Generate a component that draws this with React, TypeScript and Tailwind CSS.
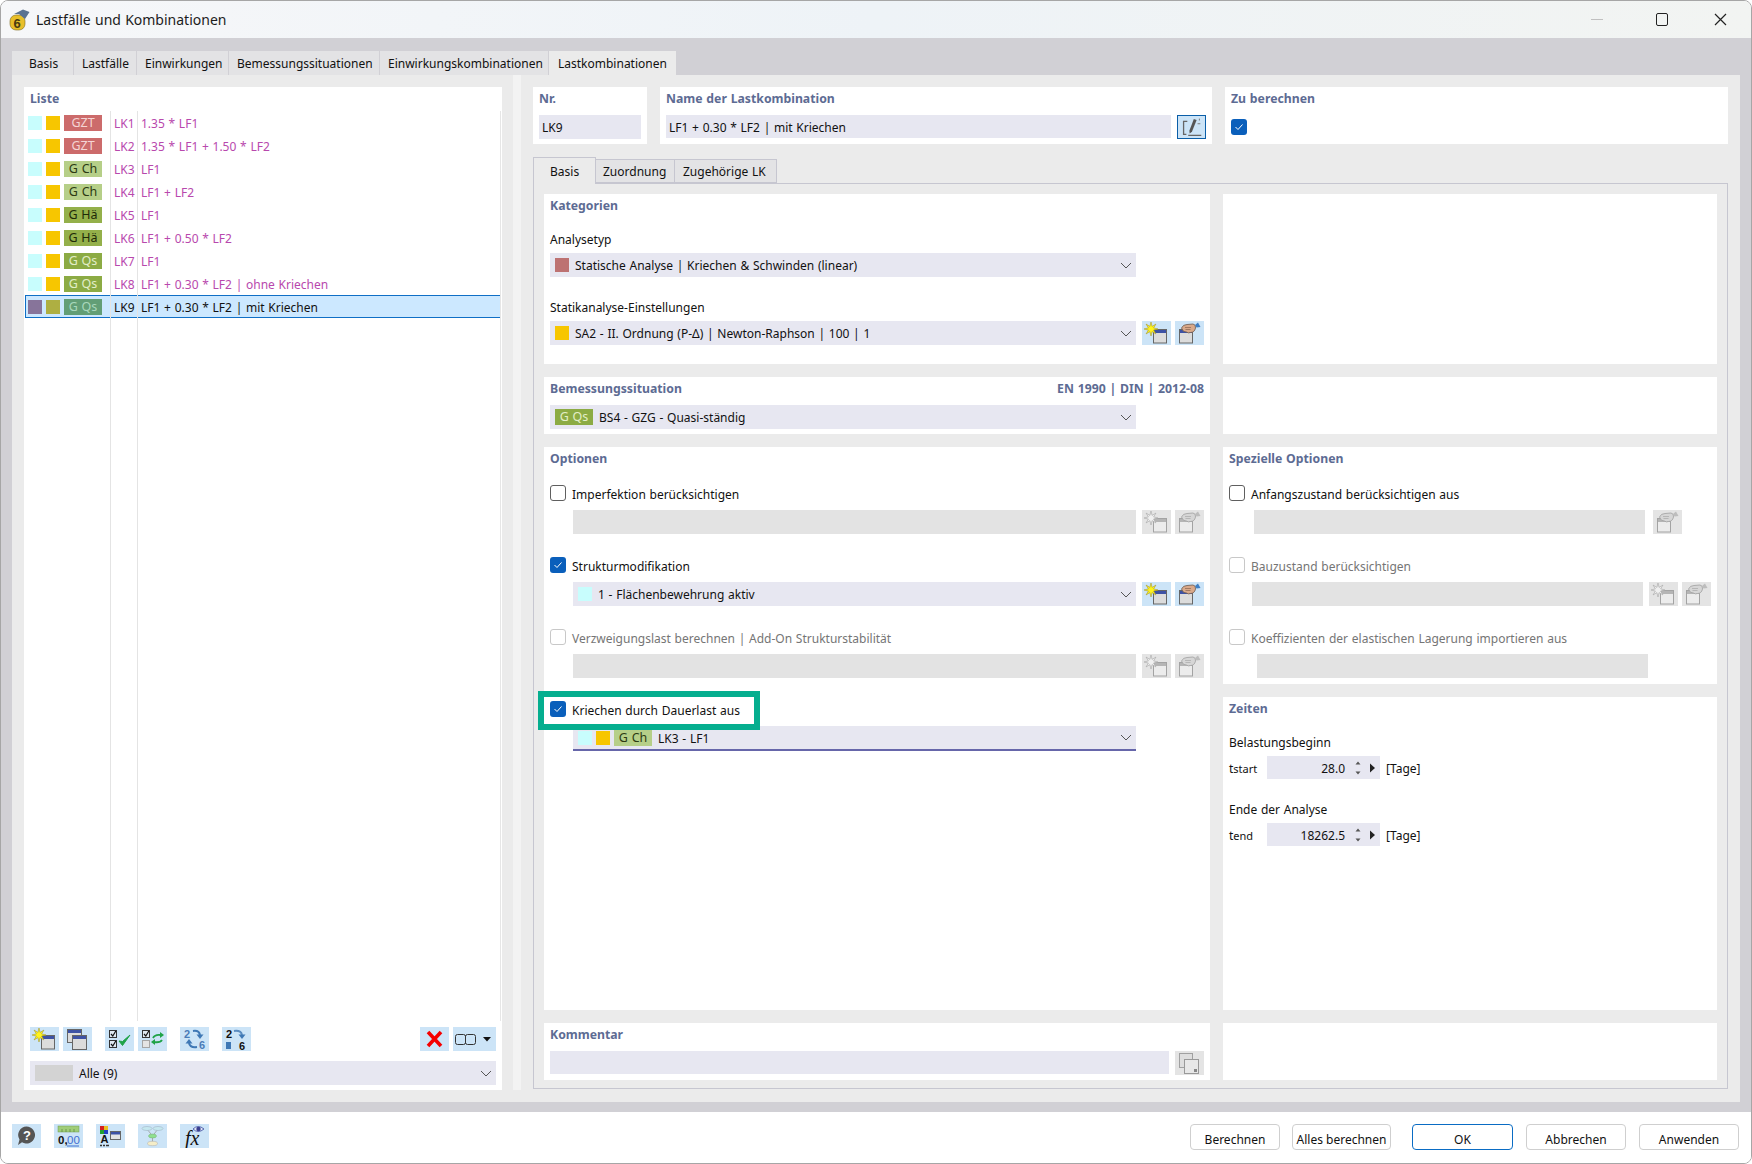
import React from 'react';

const CYAN = 'bg-[#c8fdfd]';
const YELLOW = 'bg-[#f7c600]';

const TAG_STYLES: Record<string, string> = {
  GZT: 'bg-[#cc6b6b] text-[#f5d5d5]',
  'G Ch': 'bg-[#b6cf88] text-[#2c3a12]',
  'G Hä': 'bg-[#94b04a] text-[#1e2a08]',
  'G Qs': 'bg-[#8cab44] text-[#e3eec8]',
};

const ROWS = [
  { id: 'LK1', tag: 'GZT', text: '1.35 * LF1' },
  { id: 'LK2', tag: 'GZT', text: '1.35 * LF1 + 1.50 * LF2' },
  { id: 'LK3', tag: 'G Ch', text: 'LF1' },
  { id: 'LK4', tag: 'G Ch', text: 'LF1 + LF2' },
  { id: 'LK5', tag: 'G Hä', text: 'LF1' },
  { id: 'LK6', tag: 'G Hä', text: 'LF1 + 0.50 * LF2' },
  { id: 'LK7', tag: 'G Qs', text: 'LF1' },
  { id: 'LK8', tag: 'G Qs', text: 'LF1 + 0.30 * LF2 | ohne Kriechen' },
];

// label text sits a bit lower than the centre of its row
function Txt({ children, className = '' }: { children: React.ReactNode; className?: string }) {
  return <span className={`pt-[2px] whitespace-nowrap ${className}`}>{children}</span>;
}

function Tag({ name, className = '' }: { name: string; className?: string }) {
  return (
    <span className={`w-[38px] h-4 pt-px text-[12.5px] flex items-center justify-center shrink-0 ${TAG_STYLES[name]} ${className}`}>
      {name}
    </span>
  );
}

function Star({ dis }: { dis?: boolean }) {
  return (
    <polygon
      points="9,1 10.07,5.41 13.95,3.05 11.59,6.93 16,8 11.59,9.07 13.95,12.95 10.07,10.59 9,15 7.93,10.59 4.05,12.95 6.41,9.07 2,8 6.41,6.93 4.05,3.05 7.93,5.41"
      fill={dis ? '#f0f0f0' : '#fff31a'}
      stroke={dis ? '#a5a5a5' : '#a89a2a'}
      strokeWidth="0.6"
    />
  );
}

function Win({ x, y, w, h, dis }: { x: number; y: number; w: number; h: number; dis?: boolean }) {
  return (
    <g>
      <rect x={x} y={y} width={w} height={h} fill={dis ? '#ececec' : '#dcdcdc'} stroke={dis ? '#a3a3a3' : '#666'} />
      <rect x={x + 0.5} y={y + 0.5} width={w - 1} height="3" fill={dis ? '#b5b5b5' : '#3d52a5'} />
    </g>
  );
}

function IconNew({ dis }: { dis?: boolean }) {
  return (
    <svg width="29" height="24" viewBox="0 0 29 24">
      <Win x={11.5} y={8.5} w={13} h={13.5} dis={dis} />
      <Star dis={dis} />
    </svg>
  );
}

function IconEdit({ dis }: { dis?: boolean }) {
  return (
    <svg width="29" height="24" viewBox="0 0 29 24">
      <Win x={4.5} y={8.5} w={13} h={13.5} dis={dis} />
      <path d="M6.5 7 Q8 3.5 12 3.5 L18 3 Q21 3.5 20.5 7 Q19.5 11.5 15.5 11.5 Q13 12.5 11.5 11 Q8 11.5 6.5 7Z" fill={dis ? '#d6d6d6' : '#d9a98a'} stroke={dis ? '#a0a0a0' : '#6b5a50'} strokeWidth="0.8" />
      <path d="M10 6.5 h6 M10.5 8.5 h5" stroke={dis ? '#a8a8a8' : '#8a6550'} strokeWidth="0.7" />
      <path d="M20 4 L23 1.5 L25.5 6 L21.5 6.5Z" fill={dis ? '#bdbdbd' : '#3f7fc4'} />
    </svg>
  );
}

function IconCopy({ dis }: { dis?: boolean }) {
  return (
    <svg width="29" height="24" viewBox="0 0 29 24">
      <Win x={4.5} y={2.5} w={14} h={13} dis={dis} />
      <Win x={9.5} y={8.5} w={14} h={14} dis={dis} />
    </svg>
  );
}

function Check({ x, y, on = true }: { x: number; y: number; on?: boolean }) {
  return (
    <g>
      <rect x={x} y={y} width="7" height="7" fill={on ? '#dfe8f0' : '#e4e4e4'} stroke={on ? '#333' : '#a5a5a5'} />
      {on && <path d={`M${x + 1.5} ${y + 3.5} l1.8 2 l3 -5`} stroke="#111" strokeWidth="1.2" fill="none" />}
    </g>
  );
}

function IconChecks() {
  return (
    <svg width="29" height="24" viewBox="0 0 29 24">
      <Check x={4.5} y={3.5} />
      <Check x={4.5} y={13.5} />
      <path d="M14 14 l3.5 4.5 L25 8 L17.5 14.5Z" fill="#1fa348" stroke="#1fa348" strokeWidth="1" />
    </svg>
  );
}

function IconSync() {
  return (
    <svg width="29" height="24" viewBox="0 0 29 24">
      <Check x={4.5} y={3.5} />
      <Check x={4.5} y={13.5} on={false} />
      <path d="M15 11 Q17 7 23 8" stroke="#1fa348" strokeWidth="1.8" fill="none" />
      <path d="M22 5 L26 8 L22 11Z" fill="#1fa348" />
      <path d="M24 13 Q22 16 16 15" stroke="#1fa348" strokeWidth="1.8" fill="none" />
      <path d="M17 12 L13 15 L17 18Z" fill="#1fa348" />
    </svg>
  );
}

function IconRenum() {
  return (
    <svg width="29" height="24" viewBox="0 0 29 24" className="font-['Liberation_Sans',sans-serif]">
      <text x="4" y="11" fontSize="11" fontWeight="700" fill="#4a7cb8">2</text>
      <text x="19" y="22" fontSize="11" fontWeight="700" fill="#4a7cb8">6</text>
      <path d="M13 4 Q19 3 20 8" stroke="#3f78b5" strokeWidth="2" fill="none" />
      <path d="M16.5 7.5 L23.5 7.5 L20 12Z" fill="#3f78b5" />
      <path d="M17 20 Q10 21 9 16" stroke="#3f78b5" strokeWidth="2" fill="none" />
      <path d="M5.5 16.5 L12.5 16.5 L9 12Z" fill="#3f78b5" />
    </svg>
  );
}

function IconRenum2() {
  return (
    <svg width="29" height="24" viewBox="0 0 29 24" className="font-['Liberation_Sans',sans-serif]">
      <text x="4" y="11" fontSize="11" fontWeight="700" fill="#111">2</text>
      <text x="17" y="23" fontSize="11" fontWeight="700" fill="#111">6</text>
      <rect x="4" y="15" width="5" height="7" fill="#3f78b5" />
      <path d="M12 4 Q19 3 20 8" stroke="#5b8cc0" strokeWidth="2" fill="none" />
      <path d="M16.5 7.5 L23.5 7.5 L20 12Z" fill="#3f78b5" />
    </svg>
  );
}

function IconX() {
  return (
    <svg width="29" height="24" viewBox="0 0 29 24">
      <path d="M8 5 L21 19 M21 5 L8 19" stroke="#f50000" strokeWidth="3.6" />
    </svg>
  );
}

function IconHelp() {
  return (
    <svg width="29" height="24" viewBox="0 0 29 24" className="font-['Liberation_Sans',sans-serif]">
      <path d="M14.5 2.5 a8.5 8.5 0 1 1 -4.5 15.7 L6 21 L7.5 15.5 A8.5 8.5 0 0 1 14.5 2.5Z" fill="#555" />
      <text x="11" y="15.5" fontSize="13" fontWeight="700" fill="#fff">?</text>
    </svg>
  );
}

function IconUnits() {
  return (
    <svg width="29" height="24" viewBox="0 0 29 24" className="font-['Liberation_Sans',sans-serif]">
      <rect x="4" y="2" width="21" height="6" fill="#9fcd78" stroke="#6f9c50" strokeWidth="0.5" />
      <path d="M8 5v3M12 5v3M16 5v3M20 5v3" stroke="#5f8a45" strokeWidth="0.8" />
      <text x="4" y="20" fontSize="11.5" fontWeight="700" fill="#111">0,</text>
      <text x="13" y="20" fontSize="11.5" fill="#3f6fd0">00</text>
      <path d="M13 22h12" stroke="#3f6fd0" />
    </svg>
  );
}

function IconText() {
  return (
    <svg width="29" height="24" viewBox="0 0 29 24" className="font-['Liberation_Sans',sans-serif]">
      <rect x="4" y="2" width="4" height="4" fill="#d42020" />
      <rect x="8" y="2" width="4" height="4" fill="#e8c020" />
      <rect x="4" y="6" width="4" height="4" fill="#20a030" />
      <rect x="8" y="6" width="4" height="4" fill="#2040c0" />
      <text x="4.5" y="19" fontSize="11" fontWeight="700" fill="#111">A</text>
      <path d="M4 21.5h2M7 21.5h2M10 21.5h3" stroke="#333" strokeWidth="1.5" />
      <rect x="14.5" y="7.5" width="10" height="8" fill="#e4e4e4" stroke="#666" />
      <rect x="15" y="8" width="9" height="2.5" fill="#3d52a5" />
    </svg>
  );
}

function IconGraph() {
  return (
    <svg width="29" height="24" viewBox="0 0 29 24">
      <path d="M9 5 L14.5 12 L20 5 M14.5 12 V19" stroke="#9a9a9a" strokeWidth="0.8" fill="none" />
      <ellipse cx="9" cy="4.5" rx="5" ry="2" fill="#c5e8f0" stroke="#9ab" strokeWidth="0.5" />
      <ellipse cx="20" cy="4.5" rx="5" ry="2" fill="#c5e8f0" stroke="#9ab" strokeWidth="0.5" />
      <ellipse cx="14.5" cy="12" rx="4" ry="2" fill="#8fe08f" stroke="#7a7" strokeWidth="0.5" />
      <ellipse cx="14.5" cy="19.5" rx="5" ry="2.2" fill="#f5edc8" stroke="#aaa" strokeWidth="0.5" />
    </svg>
  );
}

function IconFx() {
  return (
    <svg width="29" height="24" viewBox="0 0 29 24" className="font-['Liberation_Serif',serif]">
      <text x="5" y="21" fontSize="20" fontStyle="italic" fill="#111">fx</text>
      <path d="M13 5 Q18 0 24 5 Q18 10 13 5Z" fill="#dfe6f5" stroke="#3a4aa0" strokeWidth="0.8" />
      <circle cx="18.5" cy="5" r="2.2" fill="#3a3f90" />
    </svg>
  );
}

function IconNotes() {
  return (
    <svg width="29" height="24" viewBox="0 0 29 24">
      <rect x="4.5" y="2.5" width="13" height="14" fill="#dedede" stroke="#a0a0a0" />
      <rect x="9.5" y="8.5" width="14" height="14" fill="#e8e8e8" stroke="#999" />
      <rect x="19" y="18" width="3" height="3" fill="#888" />
    </svg>
  );
}

function IconPencil() {
  return (
    <svg width="29" height="24" viewBox="0 0 29 24">
      <path d="M10 6H6V20H9" stroke="#666" strokeWidth="1.4" fill="none" />
      <path d="M11 21H25" stroke="#666" strokeWidth="1.4" />
      <path d="M17 3.5 L20 4.5 L15 17 L12.5 19 L12.2 16Z" fill="#555" />
      <path d="M21 8.5h3M23 3v2" stroke="#777" strokeWidth="1" />
    </svg>
  );
}

function IconBtn({ children, dis, wide }: { children: React.ReactNode; dis?: boolean; wide?: boolean }) {
  return (
    <div className={`${wide ? 'w-[43px]' : 'w-[29px]'} h-6 shrink-0 flex items-center ${dis ? 'bg-[#e4e4e4]' : 'bg-[#cce4f7]'}`}>
      {children}
    </div>
  );
}

function Chevron() {
  return (
    <svg width="12" height="7" viewBox="0 0 12 7" className="shrink-0 ml-auto mr-[4px]">
      <path d="M1 1 L6 6 L11 1" stroke="#555" strokeWidth="1" fill="none" />
    </svg>
  );
}

function Select({ children, className = '' }: { children: React.ReactNode; className?: string }) {
  return (
    <div className={`h-6 bg-[#e7e7f1] flex items-center pl-[5px] shrink-0 ${className}`}>
      {children}
      <Chevron />
    </div>
  );
}

function Swatch({ color }: { color: string }) {
  return <span className={`w-[14px] h-[14px] shrink-0 ${color}`} />;
}

function Card({ title, right, className = '', children }: { title?: string; right?: string; className?: string; children?: React.ReactNode }) {
  return (
    <section className={`bg-white px-[6px] shrink-0 ${className}`}>
      {title && (
        <div className="h-[22px] pt-[2px] flex items-center justify-between font-bold text-[12.25px] text-[#5d6b93]">
          <span>{title}</span>
          {right && <span>{right}</span>}
        </div>
      )}
      {children}
    </section>
  );
}

function CheckBox({ on, dis }: { on?: boolean; dis?: boolean }) {
  if (on) {
    return (
      <span className="w-4 h-4 rounded-[3px] bg-[#0a5fbb] flex items-center justify-center shrink-0">
        <svg width="10" height="8" viewBox="0 0 10 8">
          <path d="M1.5 4 L4 6.5 L8.5 1.5" stroke="#fff" strokeWidth="1" fill="none" />
        </svg>
      </span>
    );
  }
  return <span className={`w-4 h-4 rounded-[3px] border bg-white shrink-0 ${dis ? 'border-[#c8c8c8]' : 'border-[#5f5f5f]'}`} />;
}

function CheckRow({ label, on, dis }: { label: string; on?: boolean; dis?: boolean }) {
  return (
    <div className={`h-4 flex items-center gap-[6px] ${dis ? 'text-[#757575]' : 'text-[#111]'}`}>
      <CheckBox on={on} dis={dis} />
      <span className="pt-[4px] whitespace-nowrap">{label}</span>
    </div>
  );
}

function Spin({ value }: { value: string }) {
  return (
    <div className="w-[113px] h-[23px] bg-[#e7e7f1] flex items-center justify-end shrink-0">
      <Txt>{value}</Txt>
      <svg width="8" height="16" viewBox="0 0 8 16" className="ml-[9px]">
        <path d="M4 1.5 L6.5 4.5 H1.5Z M4 14.5 L6.5 11.5 H1.5Z" fill="#555" />
      </svg>
      <svg width="7" height="10" viewBox="0 0 7 10" className="ml-[7px] mr-[4px]">
        <path d="M1 0.5 L6 5 L1 9.5Z" fill="#222" />
      </svg>
    </div>
  );
}

function ListRow({ id, tag, text }: { id: string; tag: string; text: string }) {
  return (
    <div className="h-[23px] flex items-center pl-[3px] text-[#b848ad]">
      <Swatch color={CYAN} />
      <span className="w-1" />
      <Swatch color={YELLOW} />
      <span className="w-1" />
      <Tag name={tag} />
      <Txt className="w-[39px] pl-3 shrink-0">{id}</Txt>
      <Txt className="whitespace-pre">{text}</Txt>
    </div>
  );
}

function FooterBtn({ label, w, primary }: { label: string; w: string; primary?: boolean }) {
  return (
    <button className={`${w} h-[26px] pt-[5px] rounded-[4px] border bg-white text-[#111] whitespace-nowrap ${primary ? 'border-[#0a6cc4]' : 'border-[#cfcfcf]'}`}>
      {label}
    </button>
  );
}

function TabCell({ label, w, pl }: { label: string; w: string; pl: string }) {
  return (
    <span className={`${w} ${pl} mr-px pt-[2px] bg-[#e3e3e5] flex items-center whitespace-nowrap`}>{label}</span>
  );
}

export default function App() {
  return (
    <div className="w-[1752px] h-[1164px] flex flex-col overflow-hidden rounded-t-[8px] rounded-b-[8px] border border-[#a6a6a6] bg-white text-[12px] [word-spacing:0.6px] text-[#111] font-['Noto_Sans',sans-serif]">
      {/* title bar */}
      <header className="h-[37px] shrink-0 flex items-center bg-gradient-to-r from-[#f6f7f9] via-[#eef3f7] to-[#f2f4f2]">
        <svg width="21" height="22" viewBox="0 0 21 22" className="ml-[8px] font-['Liberation_Sans',sans-serif]">
          <rect x="1" y="6" width="15" height="15" rx="6" fill="#e8bf2a" stroke="#7d6a20" strokeWidth="0.6" />
          <text x="4.5" y="18.5" fontSize="13" fontWeight="700" fill="#4a3c10">6</text>
          <path d="M5 5 L14 0.5 L20.5 3 L16 10 L10 5Z" fill="#5b7391" />
        </svg>
        <span className="ml-[6px] text-[14px] text-[#1c1c1c]">Lastfälle und Kombinationen</span>
        <span className="ml-auto w-[12px] h-px bg-[#c0c0c0]" />
        <span className="ml-[53px] w-[12px] h-[13px] border-[1.5px] border-[#222] rounded-[2px]" />
        <svg width="13" height="13" viewBox="0 0 13 13" className="ml-[46px] mr-[24px]">
          <path d="M1 1 L12 12 M12 1 L1 12" stroke="#222" strokeWidth="1.2" />
        </svg>
      </header>

      {/* main area */}
      <main className="h-[1074px] shrink-0 bg-[#d1d0d5] pt-[13px] pl-[11px] pr-[11px] flex flex-col">
        <nav className="h-[24px] flex shrink-0">
          <TabCell label="Basis" w="w-[61px]" pl="pl-[17px]" />
          <TabCell label="Lastfälle" w="w-[62px]" pl="pl-[8px]" />
          <TabCell label="Einwirkungen" w="w-[91px]" pl="pl-[8px]" />
          <TabCell label="Bemessungssituationen" w="w-[150px]" pl="pl-[8px]" />
          <TabCell label="Einwirkungskombinationen" w="w-[168px]" pl="pl-[8px]" />
          <span className="w-[127px] bg-[#ebebeb] pl-[9px] pt-[2px] flex items-center">Lastkombinationen</span>
        </nav>

        <div className="h-[1027px] w-[1728px] bg-[#ebebeb] flex shrink-0 pt-[12px] pl-[12px]">
          {/* left list */}
          <aside className="w-[478px] h-[1003px] bg-white flex flex-col shrink-0">
            <div className="h-[22px] pl-[6px] pt-[2px] flex items-center font-bold text-[12.25px] text-[#5d6b93]">Liste</div>
            <div className="relative mt-[2px] ml-px w-[476px] h-[910px] border-r border-[#e6e6e6] shrink-0">
              {ROWS.map(r => <ListRow key={r.id} {...r} />)}
              <div className="h-[23px] flex items-center pl-[2px] bg-[#cce8ff] border-y border-l border-[#0f6fc6] text-[#111]">
                <Swatch color="bg-[#87749a]" />
                <span className="w-1" />
                <Swatch color="bg-[#aeaf42]" />
                <span className="w-1" />
                <span className="w-[38px] h-4 pt-px text-[12.5px] flex items-center justify-center shrink-0 bg-[#629e76] text-[#a9d8bd]">G Qs</span>
                <Txt className="w-[39px] pl-3 shrink-0">LK9</Txt>
                <Txt>LF1 + 0.30 * LF2 | mit Kriechen</Txt>
              </div>
              <span className="absolute left-[85px] top-0 bottom-0 w-px bg-[#e4e4e4]" />
              <span className="absolute left-[112px] top-0 bottom-0 w-px bg-[#e4e4e4]" />
            </div>
            <div className="mt-[6px] px-[6px] flex items-center">
              <IconBtn><IconNew /></IconBtn>
              <span className="w-1" />
              <IconBtn><IconCopy /></IconBtn>
              <span className="w-[13px]" />
              <IconBtn><IconChecks /></IconBtn>
              <span className="w-1" />
              <IconBtn><IconSync /></IconBtn>
              <span className="w-[13px]" />
              <IconBtn><IconRenum /></IconBtn>
              <span className="w-[13px]" />
              <IconBtn><IconRenum2 /></IconBtn>
              <div className="ml-auto flex gap-1">
                <IconBtn><IconX /></IconBtn>
                <IconBtn wide>
                  <svg width="43" height="24" viewBox="0 0 43 24">
                    <rect x="2.5" y="7.5" width="10" height="10" rx="2" fill="none" stroke="#333" />
                    <rect x="12.5" y="7.5" width="10" height="10" rx="2" fill="none" stroke="#333" />
                    <path d="M30 10 H38 L34 14.5Z" fill="#111" />
                  </svg>
                </IconBtn>
              </div>
            </div>
            <Select className="mt-[10px] mx-[6px]">
              <span className="w-[38px] h-4 bg-[#d3d3d3]" />
              <Txt className="ml-[6px]">Alle (9)</Txt>
            </Select>
          </aside>

          <div className="w-[8px] ml-[11px] bg-[#f3f3f3] h-[1015px] -mt-[12px]" />

          {/* right side */}
          <div className="ml-[12px] flex flex-col w-[1195px] shrink-0">
            <div className="flex gap-[13px] shrink-0">
              <Card title="Nr." className="w-[114px] h-[57px]">
                <div className="mt-[6px] h-6 bg-[#e7e7f1] flex items-center pl-[3px]"><Txt>LK9</Txt></div>
              </Card>
              <Card title="Name der Lastkombination" className="w-[552px] h-[57px]">
                <div className="mt-[6px] flex gap-[6px]">
                  <div className="w-[505px] h-[23px] bg-[#e7e7f1] flex items-center pl-[3px]"><Txt>LF1 + 0.30 * LF2 | mit Kriechen</Txt></div>
                  <div className="w-[29px] h-6 bg-[#cce4f7] border border-[#0a5ea8] flex items-center justify-center"><IconPencil /></div>
                </div>
              </Card>
              <Card title="Zu berechnen" className="w-[503px] h-[57px]">
                <div className="mt-[10px]"><CheckBox on /></div>
              </Card>
            </div>

            <div className="mt-[13px] h-[26px] flex items-end shrink-0 relative z-10">
              <span className="w-[63px] h-[27px] bg-[#ebebeb] border-x border-t border-[#c6c6d0] pl-[16px] pt-[2px] flex items-center -mb-px">Basis</span>
              <span className="w-[79px] h-6 bg-[#e3e3e5] border-y border-r border-[#c6c6d0] pl-[7px] pt-[2px] flex items-center">Zuordnung</span>
              <span className="w-[102px] h-6 bg-[#e3e3e5] border-y border-r border-[#c6c6d0] pl-[8px] pt-[2px] flex items-center">Zugehörige LK</span>
            </div>

            <div className="w-[1195px] h-[906px] border border-[#c6c6d0] pt-[10px] pl-[10px] flex gap-[13px] shrink-0">
              <div className="w-[666px] flex flex-col gap-[13px]">
                <Card title="Kategorien" className="h-[170px]">
                  <div className="mt-[16px] h-4 flex items-center">Analysetyp</div>
                  <Select className="mt-[5px] w-[586px]">
                    <Swatch color="bg-[#bd7272]" />
                    <Txt className="ml-[6px]">Statische Analyse | Kriechen &amp; Schwinden (linear)</Txt>
                  </Select>
                  <div className="mt-[23px] h-4 flex items-center">Statikanalyse-Einstellungen</div>
                  <div className="mt-[5px] flex gap-[6px]">
                    <Select className="w-[586px]">
                      <Swatch color={YELLOW} />
                      <Txt className="ml-[6px]">SA2 - II. Ordnung (P-Δ) | Newton-Raphson | 100 | 1</Txt>
                    </Select>
                    <div className="flex gap-1">
                      <IconBtn><IconNew /></IconBtn>
                      <IconBtn><IconEdit /></IconBtn>
                    </div>
                  </div>
                </Card>

                <Card title="Bemessungssituation" right="EN 1990 | DIN | 2012-08" className="h-[57px]">
                  <Select className="mt-[6px] w-[586px]">
                    <Tag name="G Qs" />
                    <Txt className="ml-[6px]">BS4 - GZG - Quasi-ständig</Txt>
                  </Select>
                </Card>

                <Card title="Optionen" className="h-[563px]">
                  <div className="mt-[16px]"><CheckRow label="Imperfektion berücksichtigen" /></div>
                  <div className="mt-[9px] ml-[23px] flex gap-[6px]">
                    <div className="w-[563px] h-6 bg-[#e3e3e3]" />
                    <div className="flex gap-1">
                      <IconBtn dis><IconNew dis /></IconBtn>
                      <IconBtn dis><IconEdit dis /></IconBtn>
                    </div>
                  </div>
                  <div className="mt-[23px]"><CheckRow label="Strukturmodifikation" on /></div>
                  <div className="mt-[9px] ml-[23px] flex gap-[6px]">
                    <Select className="w-[563px]">
                      <Swatch color={CYAN} />
                      <Txt className="ml-[6px]">1 - Flächenbewehrung aktiv</Txt>
                    </Select>
                    <div className="flex gap-1">
                      <IconBtn><IconNew /></IconBtn>
                      <IconBtn><IconEdit /></IconBtn>
                    </div>
                  </div>
                  <div className="mt-[23px]"><CheckRow label="Verzweigungslast berechnen | Add-On Strukturstabilität" dis /></div>
                  <div className="mt-[9px] ml-[23px] flex gap-[6px]">
                    <div className="w-[563px] h-6 bg-[#e3e3e3]" />
                    <div className="flex gap-1">
                      <IconBtn dis><IconNew dis /></IconBtn>
                      <IconBtn dis><IconEdit dis /></IconBtn>
                    </div>
                  </div>
                  <div className="mt-[23px] relative">
                    <CheckRow label="Kriechen durch Dauerlast aus" on />
                    <span className="absolute -left-[12px] -top-[10px] w-[222px] h-[39px] border-[6px] border-[#05ae8f] z-10" />
                  </div>
                  <Select className="mt-[9px] ml-[23px] w-[563px] !h-[25px] border-b-2 border-[#6666aa]">
                    <Swatch color={CYAN} />
                    <span className="w-1" />
                    <Swatch color={YELLOW} />
                    <span className="w-1" />
                    <Tag name="G Ch" />
                    <Txt className="ml-[6px]">LK3 - LF1</Txt>
                  </Select>
                </Card>

                <Card title="Kommentar" className="h-[57px]">
                  <div className="mt-[6px] flex gap-[6px]">
                    <div className="w-[619px] h-[23px] bg-[#e7e7f1]" />
                    <IconBtn dis><IconNotes /></IconBtn>
                  </div>
                </Card>
              </div>

              <div className="w-[494px] flex flex-col gap-[13px]">
                <Card className="h-[170px]" />
                <Card className="h-[57px]" />
                <Card title="Spezielle Optionen" className="h-[237px]">
                  <div className="mt-[16px]"><CheckRow label="Anfangszustand berücksichtigen aus" /></div>
                  <div className="mt-[9px] ml-[25px] flex gap-2">
                    <div className="w-[391px] h-6 bg-[#e3e3e3]" />
                    <IconBtn dis><IconEdit dis /></IconBtn>
                  </div>
                  <div className="mt-[23px]"><CheckRow label="Bauzustand berücksichtigen" dis /></div>
                  <div className="mt-[9px] ml-[23px] flex gap-[6px]">
                    <div className="w-[391px] h-6 bg-[#e3e3e3]" />
                    <div className="flex gap-1">
                      <IconBtn dis><IconNew dis /></IconBtn>
                      <IconBtn dis><IconEdit dis /></IconBtn>
                    </div>
                  </div>
                  <div className="mt-[23px]"><CheckRow label="Koeffizienten der elastischen Lagerung importieren aus" dis /></div>
                  <div className="mt-[9px] ml-[28px] w-[391px] h-6 bg-[#e3e3e3]" />
                </Card>

                <Card title="Zeiten" className="h-[313px]">
                  <div className="mt-[16px] h-4 flex items-center">Belastungsbeginn</div>
                  <div className="mt-[5px] flex items-center">
                    <Txt className="w-[38px]">t<span className="text-[11px]">start</span></Txt>
                    <Spin value="28.0" />
                    <Txt className="ml-[6px]">[Tage]</Txt>
                  </div>
                  <div className="mt-[22px] h-4 flex items-center"><Txt>Ende der Analyse</Txt></div>
                  <div className="mt-[6px] flex items-center">
                    <Txt className="w-[38px]">t<span className="text-[11px]">end</span></Txt>
                    <Spin value="18262.5" />
                    <Txt className="ml-[6px]">[Tage]</Txt>
                  </div>
                </Card>

                <Card className="h-[57px]" />
              </div>
            </div>
          </div>
        </div>
      </main>

      {/* footer */}
      <footer className="flex-1 bg-white flex items-start pt-[12px] pl-[11px]">
        <div className="flex gap-[13px]">
          <IconBtn><IconHelp /></IconBtn>
          <IconBtn><IconUnits /></IconBtn>
          <IconBtn><IconText /></IconBtn>
          <IconBtn><IconGraph /></IconBtn>
          <IconBtn><IconFx /></IconBtn>
        </div>
        <div className="ml-auto mr-[12px] flex">
          <FooterBtn label="Berechnen" w="w-[90px]" />
          <span className="w-3" />
          <FooterBtn label="Alles berechnen" w="w-[99px]" />
          <span className="w-[21px]" />
          <FooterBtn label="OK" w="w-[101px]" primary />
          <span className="w-[13px]" />
          <FooterBtn label="Abbrechen" w="w-[100px]" />
          <span className="w-[13px]" />
          <FooterBtn label="Anwenden" w="w-[100px]" />
        </div>
      </footer>
    </div>
  );
}
